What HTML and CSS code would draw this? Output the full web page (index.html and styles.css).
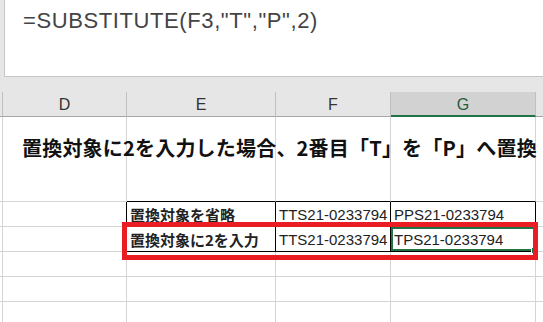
FILE: index.html
```html
<!DOCTYPE html>
<html lang="ja">
  <head>
    <meta charset="UTF-8" />
    <title>SUBSTITUTE</title>
    <link rel="stylesheet" href="styles.css">
  </head>
  <body>
    <div class="formula">=SUBSTITUTE(F3,"T","P",2)</div>
    <div class="band"></div>
    <table class="sheet">
      <colgroup>
        <col class="c-edge" />
        <col class="c-d" />
        <col class="c-e" />
        <col class="c-f" />
        <col class="c-g" />
        <col />
      </colgroup>
      <tr class="head">
        <th></th>
        <th>D</th>
        <th>E</th>
        <th>F</th>
        <th class="on">G</th>
        <th></th>
      </tr>
      <tr class="r-title">
        <td></td>
        <td class="title">置換対象に2を入力した場合、2番目「T」を「P」へ置換</td>
        <td class="kb"></td>
        <td class="kb"></td>
        <td class="kb"></td>
        <td></td>
      </tr>
      <tr class="r">
        <td></td>
        <td class="kr"></td>
        <td class="k label">置換対象を省略</td>
        <td class="k">TTS21-0233794</td>
        <td class="k">PPS21-0233794</td>
        <td></td>
      </tr>
      <tr class="r">
        <td></td>
        <td class="kr"></td>
        <td class="k label">置換対象に2を入力</td>
        <td class="k">TTS21-0233794</td>
        <td class="k sel">TPS21-0233794</td>
        <td></td>
      </tr>
      <tr class="r"><td></td><td></td><td></td><td></td><td></td><td></td></tr>
      <tr class="r"><td></td><td></td><td></td><td></td><td></td><td></td></tr>
      <tr class="r"><td></td><td></td><td></td><td></td><td></td><td></td></tr>
    </table>
    <div class="mark"></div>
  </body>
</html>
```

FILE: styles.css
```css
* {
  padding: 0;
  margin: 0;
  box-sizing: border-box;
}

body {
  width: 543px;
  height: 322px;
  overflow: hidden;
  background: #e6e6e6;
  position: relative;
  font-family: "Liberation Sans", "Noto Sans CJK JP", sans-serif;
}

.formula {
  height: 77px;
  margin-left: 4px;
  background: #fff;
  border-left: 1px solid #c6c6c6;
  border-bottom: 1px solid #c6c6c6;
  padding: 8px 0 0 18px;
  font-size: 22px;
  letter-spacing: 0.6px;
  color: #444;
}

.band {
  height: 15px;
}

.sheet {
  border-collapse: separate;
  border-spacing: 0;
  table-layout: fixed;
  width: 560px;
  background: #fff;
}

.c-edge { width: 3px; }
.c-d { width: 124px; }
.c-e { width: 149px; }
.c-f { width: 115px; }
.c-g { width: 145px; }

.sheet th,
.sheet td {
  border-right: 1px solid #d4d4d4;
  border-bottom: 1px solid #d4d4d4;
  white-space: nowrap;
  overflow: visible;
}

.sheet th {
  height: 25px;
  background: #e6e6e6;
  border-right-color: #c0c0c0;
  border-bottom-color: #a6a6a6;
  font-weight: normal;
  font-size: 16px;
  color: #333;
  padding-top: 2px;
}

.sheet th.on {
  background: #d2d2d2;
  color: #1e5c3b;
  border-bottom: 2px solid #217346;
}

.r-title td {
  height: 85px;
  vertical-align: top;
}

.title {
  padding: 16px 0 0 19px;
  font-family: "Noto Sans CJK JP", sans-serif;
  font-weight: bold;
  font-size: 20px;
  letter-spacing: 0.2px;
  color: #111;
}

.r td {
  height: 25px;
  font-size: 15px;
  color: #222;
  padding-left: 3px;
}

.sheet td.kb {
  border-bottom-color: #000;
}

.sheet td.kr {
  border-right-color: #000;
}

.sheet td.k {
  border-right-color: #000;
  border-bottom-color: #000;
}

.label {
  font-family: "Noto Sans CJK JP", sans-serif;
  font-weight: bold;
}

.sel {
  position: relative;
  box-shadow: inset 0 0 0 2px #217346;
}

.sel::after {
  content: "";
  position: absolute;
  right: -3px;
  bottom: -3px;
  width: 5px;
  height: 5px;
  background: #217346;
  border: 1px solid #fff;
}

.mark {
  position: absolute;
  left: 122px;
  top: 222px;
  width: 416px;
  height: 38px;
  border: 5px solid #ea1c24;
}
```
